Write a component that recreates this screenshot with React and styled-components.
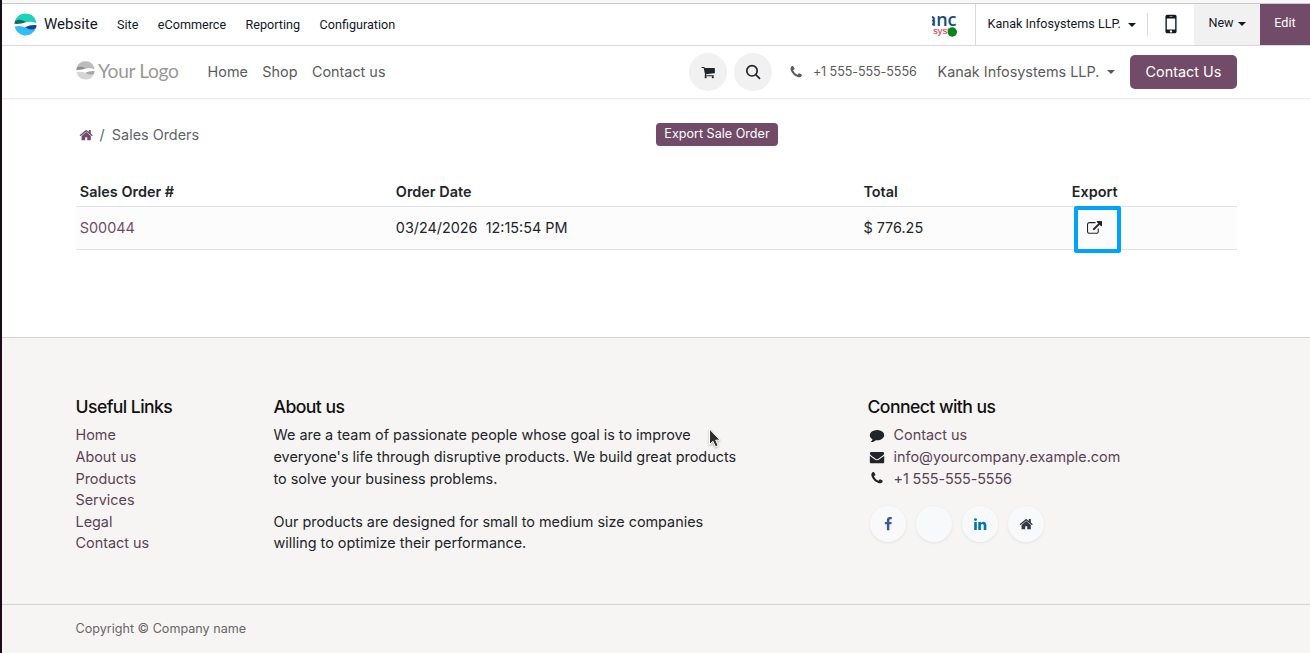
import React from 'react';
import styled, { createGlobalStyle, css } from 'styled-components';

const GlobalStyle = createGlobalStyle`
  *, *::before, *::after { box-sizing: border-box; }
  html, body { margin: 0; padding: 0; overflow: hidden; }
  body { background: #fff; color: #212529; font-family: Inter, "Liberation Sans", sans-serif; font-size: 14.4px; line-height: 1.5; }
  a { color: inherit; text-decoration: none; }
`;

const ICONS = {
  home: 'M1472 992v480q0 26-19 45t-45 19h-384v-384h-256v384h-384q-26 0-45-19t-19-45v-480q0-1 .5-3t.5-3l575-474 575 474q1 2 1 6zm223-69l-62 74q-8 9-21 11h-3q-13 0-21-7l-692-577-692 577q-12 8-24 7-13-2-21-11l-62-74q-8-10-7-23.5t11-21.5l719-599q32-26 76-26t76 26l244 204v-195q0-14 9-23t23-9h192q14 0 23 9t9 23v408l219 182q10 8 11 21.5t-7 23.5z',
  cart: 'M704 1536q0 52-38 90t-90 38-90-38-38-90 38-90 90-38 90 38 38 90zm896 0q0 52-38 90t-90 38-90-38-38-90 38-90 90-38 90 38 38 90zm128-1088v512q0 24-16.5 42.5t-40.5 21.5l-1044 122q13 60 13 70 0 16-24 64h920q26 0 45 19t19 45-19 45-45 19h-1024q-26 0-45-19t-19-45q0-11 8-31.5t16-36 21.5-40 15.5-29.5l-177-823h-204q-26 0-45-19t-19-45 19-45 45-19h256q16 0 28.5 6.5t19.5 15.5 13 24.5 8 26 5.5 29.5 4.5 26h1201q26 0 45 19t19 45z',
  phone: 'M1600 1240q0 27-10 70.5t-21 68.5q-21 50-122 106-94 51-186 51-27 0-53-3.5t-57.5-12.5-47-14.5-55.5-20.5-49-18q-98-35-175-83-127-79-264-216t-216-264q-48-77-83-175-3-9-18-49t-20.5-55.5-14.5-47-12.5-57.5-3.5-53q0-92 51-186 56-101 106-122 25-11 68.5-21t70.5-10q14 0 21 3 18 6 53 76 11 19 30 54t35 63.5 31 53.5q3 4 17.5 25t21.5 35.5 7 28.5q0 20-28.5 50t-62 55-62 53-28.5 46q0 9 5 22.5t8.5 20.5 14 24 11.5 19q76 137 174 235t235 174q2 1 19 11.5t24 14 20.5 8.5 22.5 5q18 0 46-28.5t53-62 55-62 50-28.5q14 0 28.5 7t35.5 21.5 25 17.5q25 15 53.5 31t63.5 35 54 30q70 35 76 53 3 7 3 21z',
  comment: 'M1792 896q0 174-120 321.5t-326 233-450 85.5q-70 0-145-8-198 175-460 242-49 14-114 22-17 2-30.5-9t-17.5-29v-1q-3-4-.5-12t2-10 4.5-9.5l6-9 7-8.5 8-9q7-8 31-34.5t34.5-38 31-39.5 32.5-51 27-59 26-76q-157-89-247.5-220t-90.5-281q0-130 71-248.5t191-204.5 286-136.5 348-50.5q244 0 450 85.5t326 233 120 321.5z',
  envelope: 'M1792 710v794q0 66-47 113t-113 47h-1472q-66 0-113-47t-47-113v-794q44 49 101 87 362 246 497 345 57 42 92.5 65.5t94.5 48 110 24.5h2q51 0 110-24.5t94.5-48 92.5-65.5q170-123 498-345 57-39 100-87zm0-294q0 79-49 151t-122 123q-376 261-468 325-10 7-42.5 31t-54 38.5-52 32.5-57.5 27-50 9h-2q-23 0-50-9t-57.5-27-52-32.5-54-38.5-42.5-31q-91-64-262-182.5t-205-142.5q-62-42-117-115.5t-55-136.5q0-78 41.5-130t118.5-52h1472q65 0 112.5 47t47.5 113z',
  external: 'M1408 928v320q0 119-84.5 203.5t-203.5 84.5h-832q-119 0-203.5-84.5t-84.5-203.5v-832q0-119 84.5-203.5t203.5-84.5h704q14 0 23 9t9 23v64q0 14-9 23t-23 9h-704q-66 0-113 47t-47 113v832q0 66 47 113t113 47h832q66 0 113-47t47-113v-320q0-14 9-23t23-9h64q14 0 23 9t9 23zm384-864v512q0 26-19 45t-45 19-45-19l-176-176-652 652q-10 10-23 10t-23-10l-114-114q-10-10-10-23t10-23l652-652-176-176q-19-19-19-45t19-45 45-19h512q26 0 45 19t19 45z',
  mobile: 'M976 1408q0-33-23.5-56.5t-56.5-23.5-56.5 23.5-23.5 56.5 23.5 56.5 56.5 23.5 56.5-23.5 23.5-56.5zm208-160v-704q0-13-9.5-22.5t-22.5-9.5h-512q-13 0-22.5 9.5t-9.5 22.5v704q0 13 9.5 22.5t22.5 9.5h512q13 0 22.5-9.5t9.5-22.5zm-192-848q0-16-16-16h-160q-16 0-16 16t16 16h160q16 0 16-16zm288-16v1024q0 52-38 90t-90 38h-512q-52 0-90-38t-38-90v-1024q0-52 38-90t90-38h512q52 0 90 38t38 90z',
  facebook: 'M1343 12v264h-157q-86 0-116 36t-30 108v189h293l-39 296h-254v759h-306v-759h-255v-296h255v-218q0-186 104-288.5t277-102.5q147 0 228 12z',
  linkedin: 'M477 625v991h-330v-991h330zm21-306q1 73-50.5 122t-135.5 49h-2q-82 0-132-49t-50-122q0-74 51.5-122.5t134.5-48.5 133 48.5 51 122.5zm1166 729v568h-329v-530q0-105-40.5-164.5t-126.5-59.5q-63 0-105.5 34.5t-63.5 85.5q-11 30-11 81v553h-329q2-399 2-647t-1-296l-1-48h329v144h-2q20-32 41-56t56.5-52 87-43.5 114.5-15.5q171 0 275 113.5t104 332.5z',
};

const Svg = styled.svg` display: block; flex-shrink: 0; fill: currentColor; `;

const Icon = ({ name, size = 14.4 }) => (
  <Svg width={size} height={size} viewBox="0 0 1792 1792"><path d={ICONS[name]} /></Svg>
);

const Window = styled.div`
  height: 653px; display: flex; flex-direction: column; border-left: 2px solid #1d0b1a; background: #fff;
`;

const TopEdge = styled.div` height: 4px; flex-shrink: 0; background: #f8f8f8; border-bottom: 1px solid #c9c9c9; `;

/* Backend bar */
const SystemBar = styled.nav`
  height: 42px; flex-shrink: 0; display: flex; border-bottom: 1px solid #d8dadd; color: #111827;
  font-family: Roboto, "Liberation Sans", sans-serif; font-size: 12.6px; white-space: nowrap;
`;
const AppBrand = styled.a` display: flex; align-items: center; padding-left: 12px; gap: 7px; width: 105px; font-size: 15px; `;
const Menu = styled.div` display: flex; align-items: center; gap: 19.5px; margin-left: 10px; padding-top: 1px; flex: 1; `;
const Company = styled.div`
  display: flex; align-items: center; width: 172px; padding: 0 0 0 11.5px; gap: 7px; border-left: 1px solid #d8dadd;
`;
const SysLogo = styled.div` display: flex; align-items: center; width: 43px; `;
const MobileToggle = styled.div`
  display: flex; align-items: center; justify-content: center; width: 47px; height: 23px; margin-top: 9px; padding-bottom: 2px; border-left: 1px solid #d8dadd;
`;
const BarButton = styled.button`
  display: flex; align-items: center; justify-content: center; gap: 4px; border: 0; padding: 0 0 2px; font: inherit;
  width: ${({ $primary }) => ($primary ? '50px' : '66px')};
  background: ${({ $primary }) => ($primary ? '#714b67' : '#f1f1f1')};
  color: ${({ $primary }) => ($primary ? '#fff' : 'inherit')};
`;
const Caret = styled.span` border: 4px solid transparent; border-top-color: currentColor; border-bottom: 0; `;

/* Website header */
const Header = styled.header`
  height: 53px; flex-shrink: 0; display: flex; align-items: center; padding: 0 73px 0 73.6px; color: #5b5b5b;
  border-bottom: 1px solid #ececec; box-shadow: 0 1px 1px rgba(0, 0, 0, 0.03); white-space: nowrap;
`;
const Brand = styled.a`
  display: flex; align-items: center; gap: 3.5px; width: 132px; padding-bottom: 2px; color: #999; font-family: Lato, sans-serif; font-size: 19.2px; letter-spacing: -0.35px;
`;
const NavLinks = styled.div` display: flex; gap: 14.4px; flex: 1; `;
const RoundButton = styled.button`
  display: flex; align-items: center; justify-content: center; width: 38px; height: 38px; border: 0; padding: 0;
  border-radius: 50%; background: #f1f1f1; color: #212529; margin-right: 7px;
`;
const Phone = styled.a`
  display: flex; align-items: center; gap: 9.5px; width: 148.5px; margin-left: 10px; font-size: 12.6px; letter-spacing: -0.1px;
  span { padding-top: 1px; }
`;
const UserMenu = styled.a` display: flex; align-items: center; gap: 8px; width: 192.5px; `;
const ContactButton = styled.button`
  width: 107px; height: 34px; border: 0; padding: 0; border-radius: 5px; background: #714b67; color: #fff; font: inherit;
`;

/* Orders */
const Main = styled.main` height: 238px; flex-shrink: 0; padding: 24px 73px 0 74px; `;
const Toolbar = styled.div` display: flex; align-items: flex-start; height: 55px; `;
const Breadcrumb = styled.div`
  display: flex; align-items: center; width: 580px; padding: 1px 0 0 2.5px; color: #5f6368;
  svg { color: #714b67; }
  span { margin: 0 7.2px 0 6.6px; }
`;
const ExportButton = styled.button`
  width: 122px; height: 23px; border: 0; border-radius: 4px; padding: 0 0 1px; background: #714b67; color: #fff; font: inherit; font-size: 12.6px;
`;
const Row = styled.div`
  display: grid; grid-template-columns: 316px 467.6px 208.4px 1fr; align-items: center; padding: 0 4px 0 3.8px;
  height: 43px; border-bottom: 1px solid #dee2e6; background: #fcfcfc; white-space: pre;
  ${({ $head }) => $head && css` height: 29px; background: #fff; font-weight: 600; letter-spacing: 0.03px; `}
`;
const OrderLink = styled.a` color: #714b67; `;
const ExportCell = styled.div` position: relative; padding-left: 15.6px; `;
const Highlight = styled.span`
  position: absolute; left: 2px; top: -15px; width: 47px; height: 47px; border: 4px solid #00a2ff; border-radius: 2px;
`;

/* Footer */
const Footer = styled.footer` flex: 1; display: flex; flex-direction: column; background: #f6f5f4; border-top: 1px solid #d3d3d3; `;
const FooterGrid = styled.div`
  height: 266px; padding: 56.4px 74px 0 73.5px; display: grid; grid-template-columns: 198px 594px 1fr; align-content: start;
`;
const FooterTitle = styled.h5` margin: 0 0 4px; font-size: 17.6px; line-height: 26px; font-weight: 500; letter-spacing: -0.56px; color: #111; `;
const LinkList = styled.div` display: flex; flex-direction: column; color: #5c4257; `;
const Paragraph = styled.p` margin: 0 0 21.6px; width: 475px; `;
const ContactLine = styled.div`
  display: flex; align-items: center; gap: 8px; height: 21.6px;
  svg { width: 18px; color: #212529; }
  a { color: #5c4257; }
`;
const PhoneLink = styled.a` letter-spacing: -0.13px; `;
const Socials = styled.div` display: flex; gap: 10px; padding: 16.6px 0 0 2.5px; `;
const Social = styled.a`
  display: flex; align-items: center; justify-content: center; width: 36px; height: 36px; border-radius: 50%;
  background: #f8f9fa; color: ${({ $color }) => $color}; box-shadow: 0 1px 3px rgba(0, 0, 0, 0.08);
`;
const Copyright = styled.div` flex: 1; padding: 15px 73.5px; border-top: 1px solid #d3d3d3; font-size: 12.6px; color: #666; `;
const Cursor = styled.svg` position: absolute; left: 705px; top: 426px; filter: drop-shadow(0 1px 1px rgba(0, 0, 0, 0.3)); `;

const Globe = ({ size, colors }) => (
  <svg width={size} height={size} viewBox="0 0 24 24">
    <path d="M1.2 8A11.5 11.5 0 0 1 22.8 8Q23.3 9.500 23.400 10.500Q18 8.500 12.500 9.600Q7 6 1.200 8Z" fill={colors[0]} />
    <path d="M1.200 8Q.500 10 .500 11.300Q7 11.800 12.800 9.300Q6 5.500 1.200 8Z" fill={colors[1]} />
    <path d="M.7 14Q6 12.500 12 15Q18 18 22.800 16A11.500 11.500 0 0 1 .7 14Z" fill={colors[2]} />
    <path d="M23.500 12.700Q17 12 11.500 14.900Q18 19 22.800 16Q23.500 14.500 23.500 12.700Z" fill={colors[3]} />
  </svg>
);

const links = ['Home', 'About us', 'Products', 'Services', 'Legal', 'Contact us'];

const socials = [
  { icon: 'facebook', color: '#3b5998' },
  { icon: null, color: '#000' },
  { icon: 'linkedin', color: '#0077b5' },
  { icon: 'home', color: '#343a40' },
];

export default function App() {
  return (
    <Window>
      <GlobalStyle />
      <TopEdge />
      <SystemBar>
        <AppBrand><Globe size={23} colors={['#1ad3bb', '#116b62', '#2ebcfa', '#144496']} />Website</AppBrand>
        <Menu>
          <a>Site</a><a>eCommerce</a><a>Reporting</a><a>Configuration</a>
        </Menu>
        <SysLogo>
          <svg width="25" height="26" viewBox="0 0 25 26" overflow="hidden">
            <text x="-6.300" y="14" fontFamily="Open Sans, sans-serif" fontWeight="600" fontSize="18" fill="#1b4b7a">anc</text>
            <text x="1" y="22" fontFamily="Liberation Sans, sans-serif" fontSize="9.500" fill="#e0262c">syst</text>
            <circle cx="20.300" cy="20" r="4.700" fill="#008818" />
          </svg>
        </SysLogo>
        <Company>Kanak Infosystems LLP. <Caret /></Company>
        <MobileToggle><Icon name="mobile" size={26} /></MobileToggle>
        <BarButton>New <Caret /></BarButton>
        <BarButton $primary>Edit</BarButton>
      </SystemBar>

      <Header>
        <Brand><Globe size={19} colors={['#bcbcbc', '#8f8f8f', '#d5d5d5', '#a8a8a8']} />Your Logo</Brand>
        <NavLinks><a>Home</a><a>Shop</a><a>Contact us</a></NavLinks>
        <RoundButton><Icon name="cart" /></RoundButton>
        <RoundButton>
          <svg width="16" height="16" viewBox="0 0 16 16" fill="none" stroke="currentColor" strokeWidth="1.700">
            <circle cx="7" cy="6.800" r="5.200" /><path d="M10.800 10.600L15 14.800" />
          </svg>
        </RoundButton>
        <Phone><Icon name="phone" /><span>+1 555-555-5556</span></Phone>
        <UserMenu>Kanak Infosystems LLP. <Caret /></UserMenu>
        <ContactButton>Contact Us</ContactButton>
      </Header>

      <Main>
        <Toolbar>
          <Breadcrumb><Icon name="home" /><span>/</span>Sales Orders</Breadcrumb>
          <ExportButton>Export Sale Order</ExportButton>
        </Toolbar>
        <Row $head>
          <div>Sales Order #</div><div>Order Date</div><div>Total</div><div>Export</div>
        </Row>
        <Row>
          <OrderLink>S00044</OrderLink>
          <div>{'03/24/2026  12:15:54 PM'}</div>
          <div>$ 776.25</div>
          <ExportCell><Icon name="external" size={15} /><Highlight /></ExportCell>
        </Row>
      </Main>

      <Footer>
        <FooterGrid>
          <div>
            <FooterTitle>Useful Links</FooterTitle>
            <LinkList>{links.map((l) => <a key={l}>{l}</a>)}</LinkList>
          </div>
          <div>
            <FooterTitle>About us</FooterTitle>
            <Paragraph>We are a team of passionate people whose goal is to improve everyone's life through disruptive products. We build great products to solve your business problems.</Paragraph>
            <Paragraph>Our products are designed for small to medium size companies willing to optimize their performance.</Paragraph>
          </div>
          <div>
            <FooterTitle>Connect with us</FooterTitle>
            <ContactLine><Icon name="comment" /><a>Contact us</a></ContactLine>
            <ContactLine><Icon name="envelope" /><a>info@yourcompany.example.com</a></ContactLine>
            <ContactLine><Icon name="phone" /><PhoneLink>+1 555-555-5556</PhoneLink></ContactLine>
            <Socials>
              {socials.map((s, i) => (
                <Social key={i} $color={s.color}>{s.icon && <Icon name={s.icon} />}</Social>
              ))}
            </Socials>
          </div>
        </FooterGrid>
        <Copyright>Copyright © Company name</Copyright>
      </Footer>

      <Cursor width="18" height="24" viewBox="0 0 18 24">
        <path d="M4.500 3V18.500L8 15.300L10.500 20.800L13.200 19.600L10.700 14.200H15Z" fill="#2d2d2d" stroke="#fff" strokeWidth="1" />
      </Cursor>
    </Window>
  );
}
